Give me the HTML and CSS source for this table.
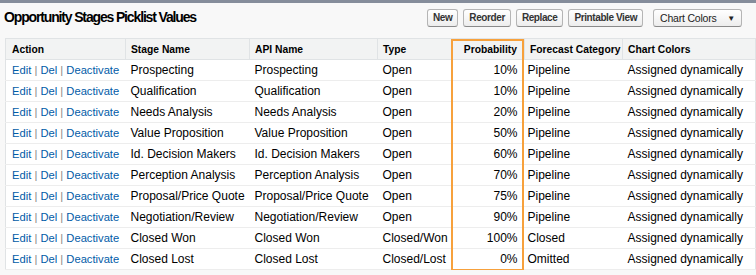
FILE: index.html
```html
<!DOCTYPE html>
<html>
<head>
<meta charset="utf-8">
<link rel="stylesheet" href="styles.css">
</head>
<body>
<div class="topbar"></div>
<div class="page">
  <div class="head">
    <h2 class="title">Opportunity Stages Picklist Values</h2>
    <div class="buttons">
      <button class="btn">New</button>
      <button class="btn">Reorder</button>
      <button class="btn">Replace</button>
      <button class="btn">Printable View</button>
      <button class="btn btn-menu">Chart Colors <span class="caret">▼</span></button>
    </div>
  </div>
  <div class="tablewrap">
    <table class="list">
      <colgroup>
        <col class="c-action"><col class="c-stage"><col class="c-api"><col class="c-type"><col class="c-prob"><col class="c-fc"><col class="c-cc">
      </colgroup>
      <thead>
        <tr><th>Action</th><th>Stage Name</th><th>API Name</th><th>Type</th><th class="num">Probability</th><th>Forecast Category</th><th>Chart Colors</th></tr>
      </thead>
      <tbody>
        <tr><td class="act"><a>Edit</a> | <a>Del</a> | <a>Deactivate</a></td><td>Prospecting</td><td>Prospecting</td><td>Open</td><td class="num">10%</td><td>Pipeline</td><td>Assigned dynamically</td></tr>
        <tr><td class="act"><a>Edit</a> | <a>Del</a> | <a>Deactivate</a></td><td>Qualification</td><td>Qualification</td><td>Open</td><td class="num">10%</td><td>Pipeline</td><td>Assigned dynamically</td></tr>
        <tr><td class="act"><a>Edit</a> | <a>Del</a> | <a>Deactivate</a></td><td>Needs Analysis</td><td>Needs Analysis</td><td>Open</td><td class="num">20%</td><td>Pipeline</td><td>Assigned dynamically</td></tr>
        <tr><td class="act"><a>Edit</a> | <a>Del</a> | <a>Deactivate</a></td><td>Value Proposition</td><td>Value Proposition</td><td>Open</td><td class="num">50%</td><td>Pipeline</td><td>Assigned dynamically</td></tr>
        <tr><td class="act"><a>Edit</a> | <a>Del</a> | <a>Deactivate</a></td><td>Id. Decision Makers</td><td>Id. Decision Makers</td><td>Open</td><td class="num">60%</td><td>Pipeline</td><td>Assigned dynamically</td></tr>
        <tr><td class="act"><a>Edit</a> | <a>Del</a> | <a>Deactivate</a></td><td>Perception Analysis</td><td>Perception Analysis</td><td>Open</td><td class="num">70%</td><td>Pipeline</td><td>Assigned dynamically</td></tr>
        <tr><td class="act"><a>Edit</a> | <a>Del</a> | <a>Deactivate</a></td><td>Proposal/Price Quote</td><td>Proposal/Price Quote</td><td>Open</td><td class="num">75%</td><td>Pipeline</td><td>Assigned dynamically</td></tr>
        <tr><td class="act"><a>Edit</a> | <a>Del</a> | <a>Deactivate</a></td><td>Negotiation/Review</td><td>Negotiation/Review</td><td>Open</td><td class="num">90%</td><td>Pipeline</td><td>Assigned dynamically</td></tr>
        <tr><td class="act"><a>Edit</a> | <a>Del</a> | <a>Deactivate</a></td><td>Closed Won</td><td>Closed Won</td><td>Closed/Won</td><td class="num">100%</td><td>Closed</td><td>Assigned dynamically</td></tr>
        <tr><td class="act"><a>Edit</a> | <a>Del</a> | <a>Deactivate</a></td><td>Closed Lost</td><td>Closed Lost</td><td>Closed/Lost</td><td class="num">0%</td><td>Omitted</td><td>Assigned dynamically</td></tr>
      </tbody>
    </table>
    <div class="highlight"></div>
  </div>
</div>
</body>
</html>
```
FILE: styles.css
```css
html, body {
  margin: 0;
  padding: 0;
  background: #f8f8f8;
  overflow: hidden;
  font-family: "Liberation Sans", Arial, sans-serif;
  color: #000;
}
.topbar {
  height: 3px;
  background: #858d9b;
}
.page {
  padding: 0 0 0 5px;
}
.head {
  display: flex;
  align-items: center;
  justify-content: space-between;
  height: 29px;
  margin-left: -1px;
  width: 738px;
}
.title {
  margin: 0;
  font-size: 14px;
  letter-spacing: -1.15px;
  font-weight: bold;
  color: #000;
  position: relative;
  top: -1px;
}
.buttons {
  display: flex;
  gap: 5px;
}
.btn {
  font-family: "Liberation Sans", Arial, sans-serif;
  font-size: 10px;
  letter-spacing: -0.4px;
  font-weight: bold;
  color: #333;
  height: 18px;
  padding: 0 5px;
  border: 1px solid #b5b5b5;
  border-bottom-color: #8a8a8a;
  border-radius: 3px;
  background: linear-gradient(#ffffff, #ededed);
  line-height: 16px;
}
.btn-menu {
  margin-left: 5px;
  padding: 0 6px 0 6px;
  font-size: 10.5px;
  letter-spacing: -0.2px;
  font-weight: normal;
  color: #222;
}
.caret {
  font-size: 8px;
  margin-left: 8px;
  position: relative;
  top: -1px;
}
.tablewrap {
  position: relative;
  margin-top: 6px;
}
.list {
  border-collapse: collapse;
  table-layout: fixed;
  width: 751px;
  background: #fff;
  border: 1px solid #e0e3e5;
  font-size: 12px;
}
.c-action { width: 120px; }
.c-stage { width: 124px; }
.c-api { width: 128px; }
.c-type { width: 74px; }
.c-prob { width: 73px; }
.c-fc { width: 98px; }
.c-cc { width: auto; }
.list th {
  background: #f2f3f3;
  text-align: left;
  font-size: 10.3px;
  font-weight: bold;
  color: #000;
  height: 20px;
  padding: 0 5px;
  border-bottom: 1px solid #e0e3e5;
  border-left: 1px solid #e0e3e5;
  white-space: nowrap;
}
.list th:first-child { border-left: none; padding-left: 6px; }
.list td {
  height: 20px;
  padding: 0 5px;
  border-bottom: 1px solid #ededed;
  white-space: nowrap;
  color: #000;
}
.list td.act { padding-left: 6px; color: #888; font-size: 11.2px; }
.list td.act a { color: #015ba7; }
.list .num { text-align: right; padding-right: 7px; }
.list td.num + td { padding-left: 3px; }
.highlight {
  position: absolute;
  left: 446px;
  top: 1px;
  width: 69px;
  height: 228px;
  border: 2px solid #f7a13c;
  pointer-events: none;
}
```
